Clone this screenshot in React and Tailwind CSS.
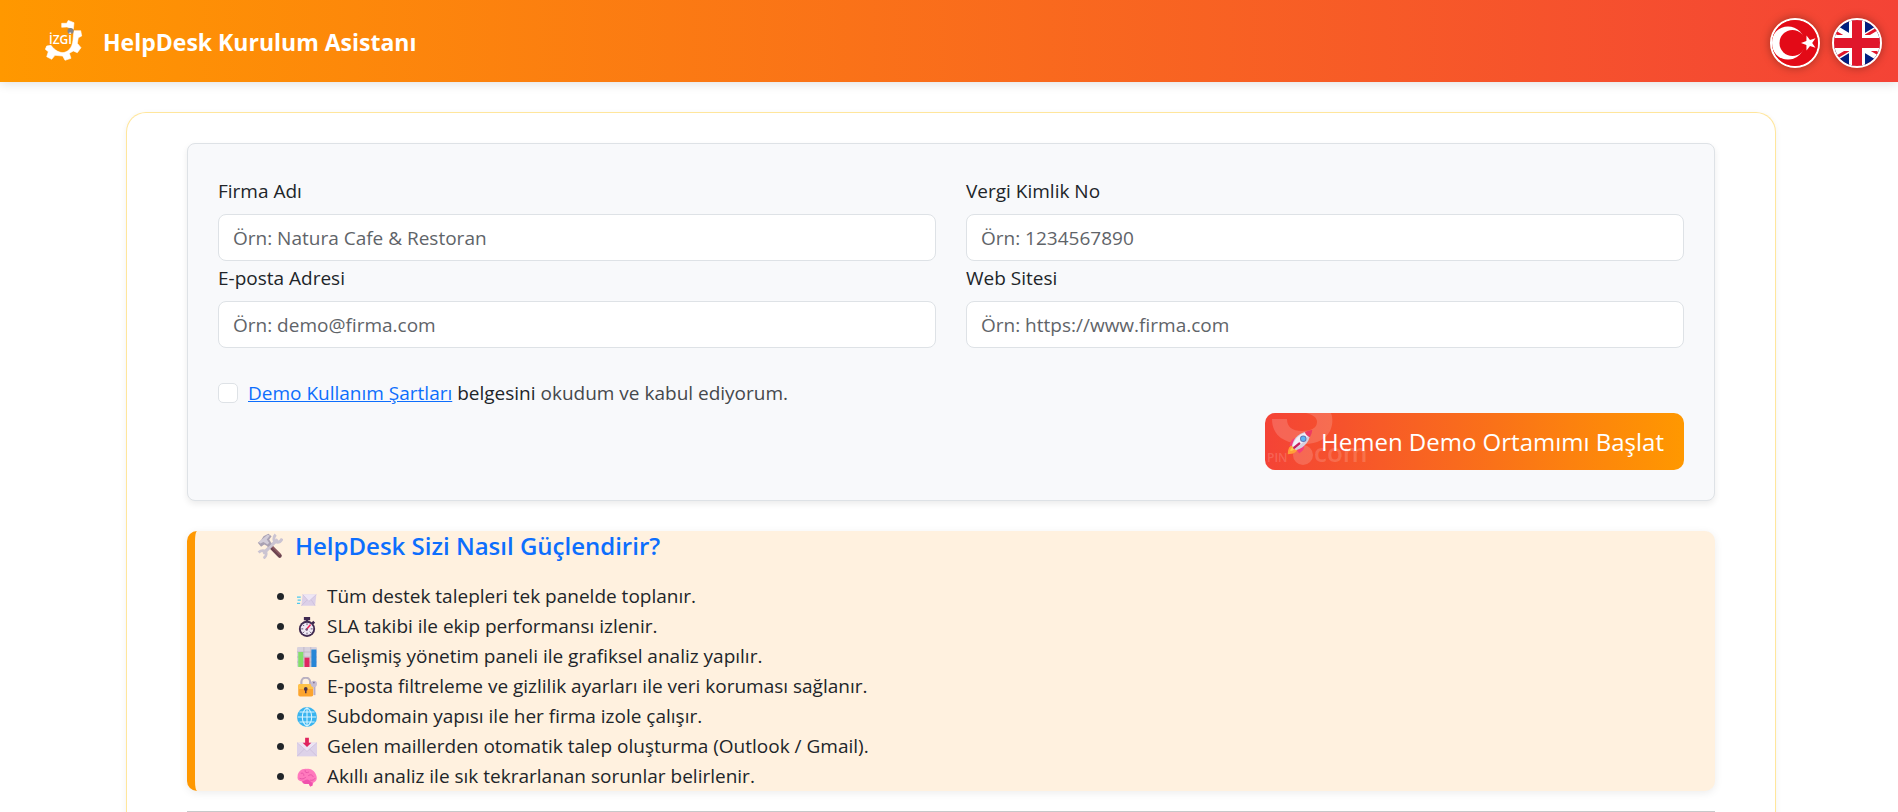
import React, { useState } from "react";

function Logo() {
  return (
    <svg viewBox="0 0 38 42" className="w-[38px] h-[42px]" aria-hidden="true">
      <path
        fill="#fff"
        stroke="#fff"
        strokeWidth="0.600"
        strokeLinejoin="round"
        d="M16.700 3.300h5L23.300.4l5.700 2.300-.7 6.600L22 7l-5.300.3zM29 10.700h6.700l1 5.300-3.400 1.700-1 5.600 3.700 4.400-3.700 5-4-1.700-4 2.300 1.700 5-6 2-2.300-4.300-7.700-.7-3.300 4-5-2.600 1.600-5-3-2.400L1.700 26l4.300-.7c4 5.700 9 7.700 13 7.200 6-1.500 9-6.500 9.300-15.800z"
      />
      <circle cx="25.500" cy="11" r="3" fill="#858585" />
      <text
        x="4"
        y="24"
        fill="#fff"
        fontSize="12"
        fontWeight="600"
        fontFamily="Open Sans, sans-serif"
      >
        İZGİ
      </text>
    </svg>
  );
}

function TurkishFlag() {
  return (
    <svg viewBox="0 0 46 46" className="w-full h-full" aria-hidden="true">
      <rect width="46" height="46" fill="#e30a17" />
      <circle cx="16" cy="23" r="16.500" fill="#fff" />
      <circle cx="20.500" cy="23" r="13" fill="#e30a17" />
      <path
        fill="#fff"
        d="M29 23l5.400-1.900.1-5.700 3.500 4.500 5.500-1.700-3.300 4.800 3.300 4.800-5.500-1.700-3.500 4.500-.1-5.700z"
      />
    </svg>
  );
}

function BritishFlag() {
  return (
    <svg viewBox="0 0 46 46" className="w-full h-full" aria-hidden="true">
      <rect width="46" height="46" fill="#012080" />
      <path
        stroke="#fff"
        strokeWidth="9"
        d="M-15 0L61 46M61 0L-15 46"
      />
      <path
        stroke="#e0162b"
        strokeWidth="3"
        d="M-17 1L23 25M63 -3L23 21M63 45L23 21M-17 49L23 25"
      />
      <path stroke="#fff" strokeWidth="16" d="M23 0V46M0 23H46" />
      <path stroke="#e0162b" strokeWidth="10" d="M23 0V46M0 23H46" />
    </svg>
  );
}

function RocketIcon() {
  return (
    <svg viewBox="0 0 32 32" className="relative w-[26px] h-[26px]" aria-hidden="true">
      <path fill="#ff9f38" d="M9 19c-6 1-8 5-8 12 7 0 11-2 12-7z" />
      <path fill="#ffcb4c" d="M8 22c-3 1-4 3-4 5 3 0 5-1 5-3z" />
      <path fill="#f43e79" d="M12 11c-5 0-8 4-9 10l8-1zM21 20c1 5-3 8-6 10l-4-6z" />
      <path fill="#d6cfdf" d="M6 21C8 10 17 3 28 3c2 10-6 20-17 23z" />
      <path fill="#f3eff7" d="M7 20C10 10 18 5 27 4c0 6-9 15-17 20z" />
      <path fill="#ec3b62" d="M22 4c3-2 6-2 9-3 0 3-1 6-3 9-3-1-5-3-6-6z" />
      <path stroke="#c61f5c" strokeWidth="3" strokeLinecap="round" d="M9 23l6-5" />
      <circle cx="20" cy="12" r="4" fill="#6478b5" />
      <circle cx="20" cy="12" r="2.800" fill="#5bb5f5" />
    </svg>
  );
}

function ToolsIcon() {
  return (
    <svg
      viewBox="0 0 32 32"
      className="w-[26px] h-[26px]"
      fill="none"
      aria-hidden="true"
    >
      <path stroke="#6d4450" strokeWidth="5" strokeLinecap="round" d="M15 15l13 13" />
      <path stroke="#8d5a62" strokeWidth="2" strokeLinecap="round" d="M16 14l12 12" />
      <path
        stroke="#cbc4d2"
        strokeWidth="4"
        strokeLinecap="round"
        d="M9 24L24 9"
      />
      <path
        stroke="#cbc4d2"
        strokeWidth="3.500"
        d="M23 2c-3 3-3 8 0 9 3 1 6 0 8-4M2 24c3-3 8-3 9 0 1 3-1 6-3 7"
      />
      <path fill="#a9a1b3" d="M1 12l4-3 3-5 6-3 4 3-3 4 3 5-4 4-5-3-4 3z" />
      <path fill="#d2ccd8" d="M2 11l5-4 6-5 3 1-4 5 3 4-2 2-5-3-4 2z" />
    </svg>
  );
}

function MailFastIcon() {
  return (
    <>
      <path fill="#dcd0e8" d="M9 12h22l-2 18H7z" />
      <path fill="#eee6f5" d="M9 12h22L19 23z" />
      <path stroke="#c6b7d6" fill="none" d="M9 12l10 11 12-11M7 30l9-9M29 30l-6-9" />
      <path stroke="#4cc9f0" strokeWidth="2" d="M0 16h6M1 21h5M0 26h5" />
    </>
  );
}

function StopwatchIcon() {
  return (
    <>
      <path fill="#402a50" d="M11 0h10v5h-3v3h-4V5h-3zM26 6l3 3-3 3-3-3z" />
      <circle cx="16" cy="19" r="13" fill="#402a50" />
      <circle cx="16" cy="19" r="10" fill="#f0eaf5" />
      <path
        stroke="#5f4b6b"
        strokeWidth="1.500"
        d="M16 10v3M16 25v3M7 19h3M22 19h3M9.500 12.500l2 2M20.500 23.500l2 2M9.500 25.500l2-2"
      />
      <path stroke="#f02b5d" strokeWidth="2.500" strokeLinecap="round" d="M15 20l6-7" />
      <circle cx="15.500" cy="20" r="2" fill="#6b5576" />
    </>
  );
}

function ChartIcon() {
  return (
    <>
      <rect width="32" height="32" rx="2" fill="#d9d2dd" />
      <path stroke="#b5abbc" d="M0 8h32M0 16h32M0 24h32M11 0v32M22 0v32" />
      <rect x="2" y="8" width="8" height="24" fill="#83df6b" />
      <rect x="12" y="17" width="8" height="15" fill="#df2861" />
      <rect x="23" y="4" width="8" height="28" fill="#2786d6" />
    </>
  );
}

function LockIcon() {
  return (
    <>
      <path stroke="#b9b0c1" strokeWidth="3.500" fill="none" d="M7 13V8a7 7 0 0 1 14 0v5" />
      <rect x="2" y="11" width="24" height="20" rx="3" fill="#fca42e" />
      <path fill="#ffc247" d="M4 11h20q2 0 2 3v5H2v-5q0-3 2-3z" />
      <circle cx="14" cy="19" r="3" fill="#4b3148" />
      <path stroke="#4b3148" strokeWidth="2.500" d="M14 19v7" />
      <path stroke="#b7abc5" strokeWidth="3" d="M28 14v15" />
      <circle cx="27" cy="11" r="5" fill="#c6bcd1" />
      <circle cx="27" cy="9" r="1.300" fill="#7b6c8b" />
    </>
  );
}

function GlobeIcon() {
  return (
    <>
      <circle cx="16" cy="16" r="16" fill="#39b4ef" />
      <path
        stroke="#d8f4ff"
        strokeWidth="1.700"
        fill="none"
        d="M16 1v30M1 16h30M4 8h24M4 24h24M16 1C6 8 6 24 16 31M16 1c10 7 10 23 0 30"
      />
    </>
  );
}

function InboxIcon() {
  return (
    <>
      <path fill="#ddd2e9" d="M0 9h32v22H0z" />
      <path fill="#ece4f3" d="M0 9h32L16 23z" />
      <path stroke="#c6b7d6" fill="none" d="M0 9l16 14L32 9M0 31l12-12M32 31L20 19" />
      <path fill="#e0245e" d="M13 1h6v8h4l-7 7-7-7h4z" />
    </>
  );
}

function BrainIcon() {
  return (
    <>
      <path
        fill="#ff79bd"
        d="M16 3c7-1 13 4 15 11 2 6-1 10-5 11l-1 5-4 1-2-4c-6 1-10-1-11-4-5 0-8-3-7-8C1 8 7 2 16 3z"
      />
      <path fill="#f052ad" d="M8 23c3 0 5-3 9-3 4 1 5 5 8 5l-1 5-3 1-2-4c-6 1-10-1-11-4z" />
      <path
        stroke="#e653a6"
        strokeWidth="1.500"
        fill="none"
        d="M6 10c4-1 5 1 5 4M13 5c-1 4 3 5 6 3M18 14c4-3 7-1 8 2M4 18c4 2 8 1 10-2M21 21c4 1 7-1 8-3"
      />
    </>
  );
}

const features = [
  { icon: MailFastIcon, text: "Tüm destek talepleri tek panelde toplanır." },
  { icon: StopwatchIcon, text: "SLA takibi ile ekip performansı izlenir." },
  { icon: ChartIcon, text: "Gelişmiş yönetim paneli ile grafiksel analiz yapılır." },
  { icon: LockIcon, text: "E-posta filtreleme ve gizlilik ayarları ile veri koruması sağlanır." },
  { icon: GlobeIcon, text: "Subdomain yapısı ile her firma izole çalışır." },
  { icon: InboxIcon, text: "Gelen maillerden otomatik talep oluşturma (Outlook / Gmail)." },
  { icon: BrainIcon, text: "Akıllı analiz ile sık tekrarlanan sorunlar belirlenir." },
];

const fields = [
  { id: "company", label: "Firma Adı", placeholder: "Örn: Natura Cafe & Restoran" },
  { id: "tax-no", label: "Vergi Kimlik No", placeholder: "Örn: 1234567890" },
  { id: "email", label: "E-posta Adresi", placeholder: "Örn: demo@firma.com", type: "email" },
  { id: "website", label: "Web Sitesi", placeholder: "Örn: https://www.firma.com", type: "url" },
];

function Header() {
  return (
    <header className="flex items-center justify-between h-[82px] pl-[45px] pr-4 bg-linear-to-r/srgb from-[#ff9800] to-[#f44336] shadow-[0_2px_10px_rgba(0,0,0,0.12)]">
      <div className="flex items-center gap-5">
        <Logo />
        <h1 className="pt-0.5 text-[23px] leading-[30px] font-bold text-white">
          HelpDesk Kurulum Asistanı
        </h1>
      </div>
      <div className="flex gap-3 pt-1">
        <button
          aria-label="Türkçe"
          className="w-[50px] h-[50px] rounded-full border-2 border-white overflow-hidden shadow-[0_0_10px_rgba(0,0,0,0.35)]"
        >
          <TurkishFlag />
        </button>
        <button
          aria-label="English"
          className="w-[50px] h-[50px] rounded-full border-2 border-white overflow-hidden shadow-[0_0_10px_rgba(0,0,0,0.35)]"
        >
          <BritishFlag />
        </button>
      </div>
    </header>
  );
}

function DemoForm() {
  const [accepted, setAccepted] = useState(false);

  return (
    <form
      className="p-[30px] rounded-lg border border-[#dee2e6] bg-[#f8f9fb] shadow-[0_3px_6px_rgba(0,0,0,0.08)]"
      onSubmit={(e) => e.preventDefault()}
    >
      <div className="grid grid-cols-2 gap-x-[30px]">
        {fields.map((field) => (
          <div key={field.id}>
            <label htmlFor={field.id} className="block pt-0.5 mb-2">
              {field.label}
            </label>
            <input
              id={field.id}
              type={field.type || "text"}
              placeholder={field.placeholder}
              className="block w-full h-[47px] px-[14px] rounded-lg border border-[#dee2e6] bg-white placeholder:text-[#5f6469]"
            />
          </div>
        ))}
      </div>

      <div className="flex items-center gap-[10px] mt-[30px]">
        <input
          id="terms"
          type="checkbox"
          checked={accepted}
          onChange={(e) => setAccepted(e.target.checked)}
          className="appearance-none w-5 h-5 rounded-[5px] border border-[#dee2e6] bg-white checked:bg-[#0d6efd]"
        />
        <label htmlFor="terms">
          <a href="#terms" className="text-[#0d6efd] underline">
            Demo Kullanım Şartları
          </a>{" "}
          belgesini <span className="text-[#45484c]">okudum ve kabul ediyorum.</span>
        </label>
      </div>

      <div className="flex justify-end mt-[5px]">
        <button
          type="submit"
          className="relative flex items-center gap-2 h-[57px] pl-[22px] pr-5 rounded-[10px] overflow-hidden bg-linear-to-r/srgb from-[#f44336] to-[#ff9800] text-[24px] text-white"
        >
          <svg
            viewBox="0 0 110 57"
            className="absolute left-0 top-0 w-[110px] h-[57px]"
            fill="#fff"
            fillOpacity="0.17"
            aria-hidden="true"
          >
            <path d="M7 6h15c0 8 5 12 15 12 9 0 15-3 15-9 0-5-4-7-11-9h25c2 5 2 12-1 18-4 8-13 13-25 13C20 31 7 23 7 6z" />
            <circle cx="38" cy="42" r="10" />
            <text x="49" y="49" fontSize="26" fontWeight="600" fontFamily="Open Sans, sans-serif">
              com
            </text>
            <text x="2" y="49" fontSize="12" fontWeight="600" fontFamily="Open Sans, sans-serif">
              PIN
            </text>
          </svg>
          <RocketIcon />
          <span className="relative">Hemen Demo Ortamımı Başlat</span>
        </button>
      </div>
    </form>
  );
}

function Features() {
  return (
    <section className="mt-[30px] px-[60px] rounded-[10px] border-l-8 border-[#ff9800] bg-[#fff1df] shadow-[0_2px_8px_rgba(0,0,0,0.08)]">
      <h2 className="flex items-center gap-3 pl-0.5 mb-5 text-[24px] leading-[30px] font-semibold text-[#0d6efd]">
        <ToolsIcon />
        HelpDesk Sizi Nasıl Güçlendirir?
      </h2>
      <ul className="pl-[42px] list-disc">
        {features.map(({ icon: Icon, text }) => (
          <li key={text}>
            <svg
              viewBox="0 0 32 32"
              className="inline-block w-5 h-5 mr-[10px] align-[-4px]"
              aria-hidden="true"
            >
              <Icon />
            </svg>
            {text}
          </li>
        ))}
      </ul>
    </section>
  );
}

export default function App() {
  return (
    <div className="min-h-screen bg-white font-['Open_Sans','Noto_Sans',sans-serif] text-[19px] leading-[30px] text-[#212529]">
      <Header />
      <main className="pl-1 pt-[30px]">
        <div className="max-w-[1650px] mx-auto px-[60px] py-[30px] rounded-t-[20px] border border-b-0 border-[#ffe69c] shadow-[0_2px_6px_rgba(0,0,0,0.06)]">
          <DemoForm />
          <Features />
          <hr className="mt-5 border-[#c7c8c9]" />
        </div>
      </main>
    </div>
  );
}
